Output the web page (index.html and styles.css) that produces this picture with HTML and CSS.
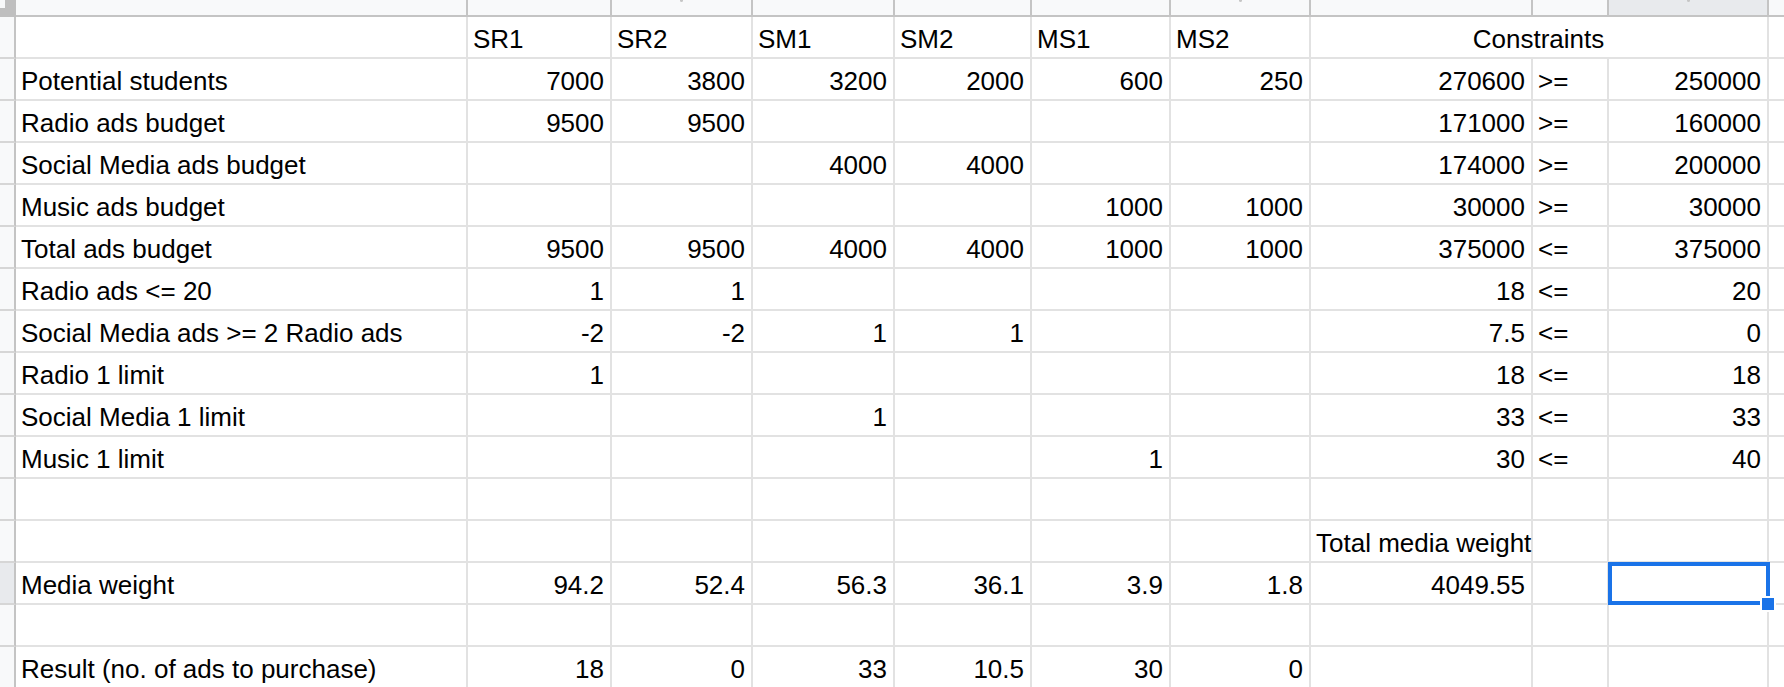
FILE: index.html
```html
<!DOCTYPE html>
<html>
<head>
<meta charset="utf-8">
<link rel="stylesheet" href="styles.css">
</head>
<body>
<div class="sheet">
  <!-- column header strip -->
  <div class="corner"><span class="notch"></span></div>
  <div class="ch"></div><div class="ch"></div><div class="ch"><span class="tick"></span></div><div class="ch"></div><div class="ch"></div><div class="ch"></div><div class="ch"><span class="tick"></span></div><div class="ch"></div><div class="ch"></div><div class="ch sel"><span class="tick"></span></div><div class="ch last"></div>

  <!-- 1 -->
  <div class="rh"></div>
  <div class="c"></div><div class="c">SR1</div><div class="c">SR2</div><div class="c">SM1</div><div class="c">SM2</div><div class="c">MS1</div><div class="c">MS2</div>
  <div class="c merge3">Constraints</div><div class="c last"></div>

  <!-- 2 -->
  <div class="rh"></div>
  <div class="c">Potential students</div><div class="c n">7000</div><div class="c n">3800</div><div class="c n">3200</div><div class="c n">2000</div><div class="c n">600</div><div class="c n">250</div>
  <div class="c n">270600</div><div class="c">&gt;=</div><div class="c n">250000</div><div class="c last"></div>

  <!-- 3 -->
  <div class="rh"></div>
  <div class="c">Radio ads budget</div><div class="c n">9500</div><div class="c n">9500</div><div class="c"></div><div class="c"></div><div class="c"></div><div class="c"></div>
  <div class="c n">171000</div><div class="c">&gt;=</div><div class="c n">160000</div><div class="c last"></div>

  <!-- 4 -->
  <div class="rh"></div>
  <div class="c">Social Media ads budget</div><div class="c"></div><div class="c"></div><div class="c n">4000</div><div class="c n">4000</div><div class="c"></div><div class="c"></div>
  <div class="c n">174000</div><div class="c">&gt;=</div><div class="c n">200000</div><div class="c last"></div>

  <!-- 5 -->
  <div class="rh"></div>
  <div class="c">Music ads budget</div><div class="c"></div><div class="c"></div><div class="c"></div><div class="c"></div><div class="c n">1000</div><div class="c n">1000</div>
  <div class="c n">30000</div><div class="c">&gt;=</div><div class="c n">30000</div><div class="c last"></div>

  <!-- 6 -->
  <div class="rh"></div>
  <div class="c">Total ads budget</div><div class="c n">9500</div><div class="c n">9500</div><div class="c n">4000</div><div class="c n">4000</div><div class="c n">1000</div><div class="c n">1000</div>
  <div class="c n">375000</div><div class="c">&lt;=</div><div class="c n">375000</div><div class="c last"></div>

  <!-- 7 -->
  <div class="rh"></div>
  <div class="c">Radio ads &lt;= 20</div><div class="c n">1</div><div class="c n">1</div><div class="c"></div><div class="c"></div><div class="c"></div><div class="c"></div>
  <div class="c n">18</div><div class="c">&lt;=</div><div class="c n">20</div><div class="c last"></div>

  <!-- 8 -->
  <div class="rh"></div>
  <div class="c">Social Media ads &gt;= 2 Radio ads</div><div class="c n">-2</div><div class="c n">-2</div><div class="c n">1</div><div class="c n">1</div><div class="c"></div><div class="c"></div>
  <div class="c n">7.5</div><div class="c">&lt;=</div><div class="c n">0</div><div class="c last"></div>

  <!-- 9 -->
  <div class="rh"></div>
  <div class="c">Radio 1 limit</div><div class="c n">1</div><div class="c"></div><div class="c"></div><div class="c"></div><div class="c"></div><div class="c"></div>
  <div class="c n">18</div><div class="c">&lt;=</div><div class="c n">18</div><div class="c last"></div>

  <!-- 10 -->
  <div class="rh"></div>
  <div class="c">Social Media 1 limit</div><div class="c"></div><div class="c"></div><div class="c n">1</div><div class="c"></div><div class="c"></div><div class="c"></div>
  <div class="c n">33</div><div class="c">&lt;=</div><div class="c n">33</div><div class="c last"></div>

  <!-- 11 -->
  <div class="rh"></div>
  <div class="c">Music 1 limit</div><div class="c"></div><div class="c"></div><div class="c"></div><div class="c"></div><div class="c n">1</div><div class="c"></div>
  <div class="c n">30</div><div class="c">&lt;=</div><div class="c n">40</div><div class="c last"></div>

  <!-- 12 -->
  <div class="rh"></div>
  <div class="c"></div><div class="c"></div><div class="c"></div><div class="c"></div><div class="c"></div><div class="c"></div><div class="c"></div>
  <div class="c"></div><div class="c"></div><div class="c"></div><div class="c last"></div>

  <!-- 13 -->
  <div class="rh"></div>
  <div class="c"></div><div class="c"></div><div class="c"></div><div class="c"></div><div class="c"></div><div class="c"></div><div class="c"></div>
  <div class="c">Total media weight</div><div class="c"></div><div class="c"></div><div class="c last"></div>

  <!-- 14 -->
  <div class="rh sel"></div>
  <div class="c">Media weight</div><div class="c n">94.2</div><div class="c n">52.4</div><div class="c n">56.3</div><div class="c n">36.1</div><div class="c n">3.9</div><div class="c n">1.8</div>
  <div class="c n">4049.55</div><div class="c"></div><div class="c active"><span class="selbox"></span><span class="handle"></span></div><div class="c last"></div>

  <!-- 15 -->
  <div class="rh"></div>
  <div class="c"></div><div class="c"></div><div class="c"></div><div class="c"></div><div class="c"></div><div class="c"></div><div class="c"></div>
  <div class="c"></div><div class="c"></div><div class="c"></div><div class="c last"></div>

  <!-- 16 -->
  <div class="rh"></div>
  <div class="c">Result (no. of ads to purchase)</div><div class="c n">18</div><div class="c n">0</div><div class="c n">33</div><div class="c n">10.5</div><div class="c n">30</div><div class="c n">0</div>
  <div class="c"></div><div class="c"></div><div class="c"></div><div class="c last"></div>
</div>
</body>
</html>
```

FILE: styles.css
```css
html, body {
  margin: 0;
  padding: 0;
  background: #ffffff;
  overflow: hidden;
}

.sheet {
  display: grid;
  grid-template-columns: 16px 452px 144px 141px 142px 137px 139px 140px 222px 76px 160px 15px;
  grid-template-rows: 17px repeat(16, 42px);
  width: 1784px;
  font-family: "Liberation Sans", Arial, sans-serif;
  font-size: 26px;
  line-height: 30px;
  color: #000000;
}

.corner {
  box-sizing: border-box;
  background: #bfbfbf;
  border-right: 2px solid #bfbfbf;
  border-bottom: 2px solid #bfbfbf;
}

.notch {
  display: block;
  width: 5px;
  height: 8px;
  background: #f8f9fa;
}

.ch {
  box-sizing: border-box;
  display: flex;
  justify-content: center;
  align-items: flex-start;
  background: #f8f9fa;
  border-right: 2px solid #c4c4c4;
  border-bottom: 2px solid #c4c4c4;
}

.ch.sel {
  background: #e8eaed;
}

.ch.last {
  border-right: none;
}

.tick {
  display: block;
  width: 3px;
  height: 2px;
  border-radius: 0 0 2px 2px;
  background: #c6c6c6;
}

.rh {
  box-sizing: border-box;
  background: #f8f9fa;
  border-right: 2px solid #c4c4c4;
  border-bottom: 2px solid #d6d6d6;
}

.rh.sel {
  background: #e8eaed;
}

.c {
  box-sizing: border-box;
  display: flex;
  align-items: flex-end;
  justify-content: flex-start;
  padding: 0 6px 3px 5px;
  border-right: 2px solid #e2e2e2;
  border-bottom: 2px solid #e2e2e2;
  white-space: nowrap;
}

.c.n {
  justify-content: flex-end;
}

.c.merge3 {
  grid-column: span 3;
  justify-content: center;
}

.c.last {
  border-right: none;
}

.c.active {
  position: relative;
}

.selbox {
  position: absolute;
  left: -1px;
  top: -1px;
  width: 162px;
  height: 43px;
  box-sizing: border-box;
  border: 4px solid #1a73e8;
}

.handle {
  position: absolute;
  left: 151px;
  top: 33px;
  width: 16px;
  height: 16px;
  box-sizing: border-box;
  border: 2px solid #ffffff;
  background: #1a73e8;
}
```
